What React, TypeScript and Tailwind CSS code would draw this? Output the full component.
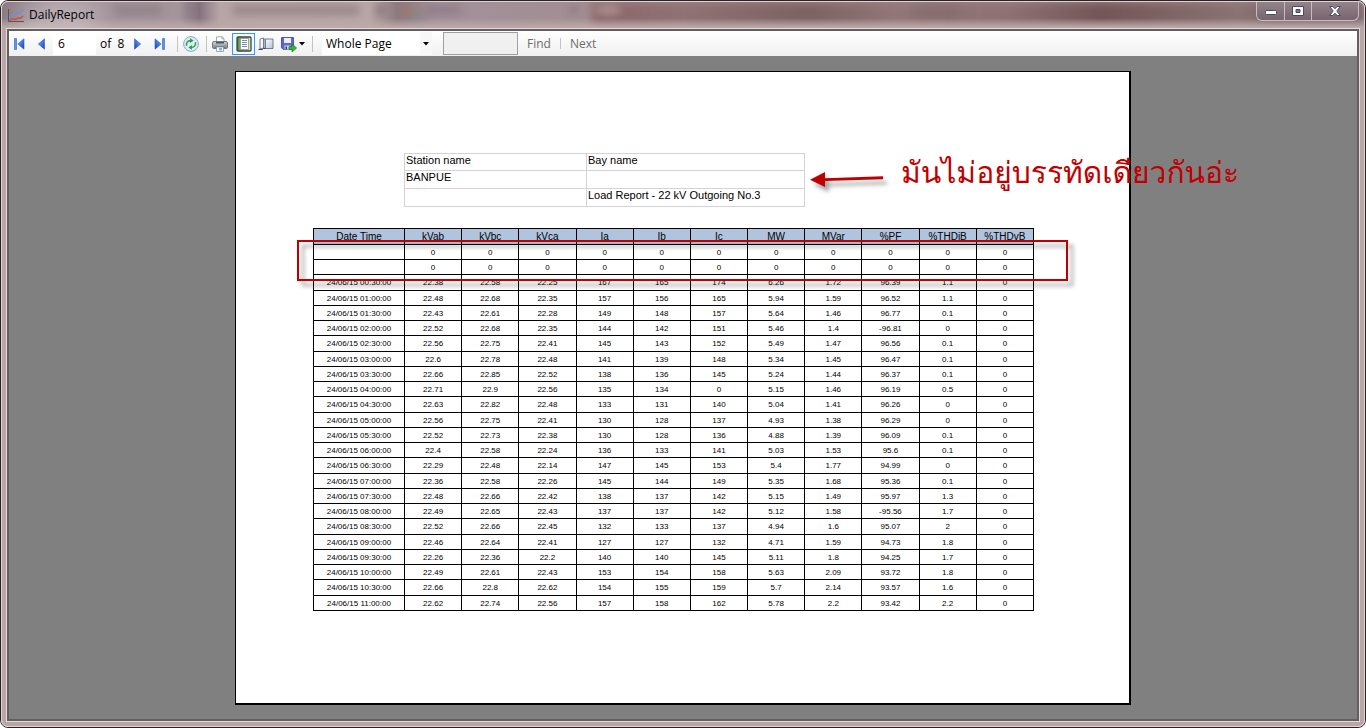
import type { ReactNode } from "react";

const columns = ["Date Time", "kVab", "kVbc", "kVca", "Ia", "Ib", "Ic", "MW", "MVar", "%PF", "%THDiB", "%THDvB"];

const rows = [
  ["", "0", "0", "0", "0", "0", "0", "0", "0", "0", "0", "0"],
  ["", "0", "0", "0", "0", "0", "0", "0", "0", "0", "0", "0"],
  ["24/06/15 00:30:00", "22.38", "22.58", "22.25", "167", "165", "174", "6.26", "1.72", "96.39", "1.1", "0"],
  ["24/06/15 01:00:00", "22.48", "22.68", "22.35", "157", "156", "165", "5.94", "1.59", "96.52", "1.1", "0"],
  ["24/06/15 01:30:00", "22.43", "22.61", "22.28", "149", "148", "157", "5.64", "1.46", "96.77", "0.1", "0"],
  ["24/06/15 02:00:00", "22.52", "22.68", "22.35", "144", "142", "151", "5.46", "1.4", "-96.81", "0", "0"],
  ["24/06/15 02:30:00", "22.56", "22.75", "22.41", "145", "143", "152", "5.49", "1.47", "96.56", "0.1", "0"],
  ["24/06/15 03:00:00", "22.6", "22.78", "22.48", "141", "139", "148", "5.34", "1.45", "96.47", "0.1", "0"],
  ["24/06/15 03:30:00", "22.66", "22.85", "22.52", "138", "136", "145", "5.24", "1.44", "96.37", "0.1", "0"],
  ["24/06/15 04:00:00", "22.71", "22.9", "22.56", "135", "134", "0", "5.15", "1.46", "96.19", "0.5", "0"],
  ["24/06/15 04:30:00", "22.63", "22.82", "22.48", "133", "131", "140", "5.04", "1.41", "96.26", "0", "0"],
  ["24/06/15 05:00:00", "22.56", "22.75", "22.41", "130", "128", "137", "4.93", "1.38", "96.29", "0", "0"],
  ["24/06/15 05:30:00", "22.52", "22.73", "22.38", "130", "128", "136", "4.88", "1.39", "96.09", "0.1", "0"],
  ["24/06/15 06:00:00", "22.4", "22.58", "22.24", "136", "133", "141", "5.03", "1.53", "95.6", "0.1", "0"],
  ["24/06/15 06:30:00", "22.29", "22.48", "22.14", "147", "145", "153", "5.4", "1.77", "94.99", "0", "0"],
  ["24/06/15 07:00:00", "22.36", "22.58", "22.26", "145", "144", "149", "5.35", "1.68", "95.36", "0.1", "0"],
  ["24/06/15 07:30:00", "22.48", "22.66", "22.42", "138", "137", "142", "5.15", "1.49", "95.97", "1.3", "0"],
  ["24/06/15 08:00:00", "22.49", "22.65", "22.43", "137", "137", "142", "5.12", "1.58", "-95.56", "1.7", "0"],
  ["24/06/15 08:30:00", "22.52", "22.66", "22.45", "132", "133", "137", "4.94", "1.6", "95.07", "2", "0"],
  ["24/06/15 09:00:00", "22.46", "22.64", "22.41", "127", "127", "132", "4.71", "1.59", "94.73", "1.8", "0"],
  ["24/06/15 09:30:00", "22.26", "22.36", "22.2", "140", "140", "145", "5.11", "1.8", "94.25", "1.7", "0"],
  ["24/06/15 10:00:00", "22.49", "22.61", "22.43", "153", "154", "158", "5.63", "2.09", "93.72", "1.8", "0"],
  ["24/06/15 10:30:00", "22.66", "22.8", "22.62", "154", "155", "159", "5.7", "2.14", "93.57", "1.6", "0"],
  ["24/06/15 11:00:00", "22.62", "22.74", "22.56", "157", "158", "162", "5.78", "2.2", "93.42", "2.2", "0"],
];

function ToolButton({ label, className, children }: { label: string; className: string; children: ReactNode }) {
  return (
    <button type="button" aria-label={label} className={`flex flex-none items-center justify-center ${className}`}>
      {children}
    </button>
  );
}

function Separator({ className }: { className: string }) {
  return <span className={`w-px flex-none bg-[#c3c3c3] ${className}`} />;
}

function Defs() {
  return (
    <svg width="0" height="0" className="absolute">
      <defs>
        <linearGradient id="blue" x1="0" y1="0" x2="1" y2="1">
          <stop offset="0" stopColor="#7db2f2" />
          <stop offset="1" stopColor="#0a3fc4" />
        </linearGradient>
        <linearGradient id="silver" x1="0" y1="0" x2="0" y2="1">
          <stop offset="0" stopColor="#d4d7da" />
          <stop offset="1" stopColor="#7d8389" />
        </linearGradient>
        <linearGradient id="green" x1="0" y1="0" x2="1" y2="0">
          <stop offset="0" stopColor="#2f7a3a" />
          <stop offset=".35" stopColor="#a9cfa6" />
          <stop offset="1" stopColor="#dbe8d6" />
        </linearGradient>
        <linearGradient id="paper" x1="0" y1="0" x2="1" y2="1">
          <stop offset="0" stopColor="#ffffff" />
          <stop offset="1" stopColor="#b3c1d6" />
        </linearGradient>
      </defs>
    </svg>
  );
}

function ChartIcon() {
  return (
    <svg width="17" height="15" viewBox="0 0 17 15" fill="none">
      <path d="M.5 1v12.500H16" stroke="#55565c" />
      <path d="M1.500 11l2.500-4 1.500-.5 1.500 2 3-4 1.500 1L15.500 1" stroke="#6d93cc" strokeWidth="1.300" />
      <path d="M1.500 12.300l3-1.500 3 .7 2.500-1.500 2 .5 3-2.500" stroke="#e0473b" strokeWidth="1.400" />
    </svg>
  );
}

function ArrowIcon({ bar, flip }: { bar?: boolean; flip?: boolean }) {
  return (
    <svg width="11" height="12" viewBox="0 0 11 12" className={flip ? "-scale-x-100" : ""}>
      {bar && <path d="M.5.500h2v11h-2z" fill="#5d92e4" stroke="#2b62c8" strokeWidth=".6" />}
      <path d={bar ? "M10 .8v10.400L3.800 6z" : "M8.500.8v10.400L2.300 6z"} fill="url(#blue)" stroke="#2660cf" strokeWidth=".6" />
    </svg>
  );
}

function RefreshIcon() {
  return (
    <svg width="16" height="16" viewBox="0 0 16 16">
      <circle cx="8" cy="8" r="7.400" fill="#dcebfa" stroke="#86a9d4" />
      <path d="M3.600 9.800C2.800 6.800 4.600 4.700 7.500 4.500" fill="none" stroke="#2f9e3c" strokeWidth="1.500" />
      <path d="M7 2.200l3.600 2.300L7 6.900z" fill="#2f9e3c" />
      <path d="M12.400 6.200c.8 3-1 5.100-3.900 5.300" fill="none" stroke="#2f9e3c" strokeWidth="1.500" />
      <path d="M9 13.800l-3.600-2.300L9 9.100z" fill="#2f9e3c" />
    </svg>
  );
}

function PrinterIcon() {
  return (
    <svg width="16" height="16" viewBox="0 0 16 16">
      <path d="M4.500 6V.8h5.700l1.800 1.700V6z" fill="#fff" stroke="#8b97a4" strokeWidth=".8" />
      <path d="M10 .8v2h2" fill="#dce4ec" stroke="#7b8794" strokeWidth=".6" />
      <rect x=".5" y="5.500" width="15" height="7" rx="1.500" fill="url(#silver)" stroke="#73797f" />
      <path d="M4 6h8v1.500H4zM3.500 10.500h9V12h-9z" fill="#50565d" />
      <path d="M4.500 11h7v4.500h-7z" fill="#fff" stroke="#7f95ad" strokeWidth=".8" />
      <path d="M7 12h3v2.500H7z" fill="#78b5de" />
      <path d="M13 8.800h1.200" stroke="#42c23f" />
    </svg>
  );
}

function LayoutIcon() {
  return (
    <svg width="16" height="16" viewBox="0 0 16 16">
      <rect x="1" y="1" width="14" height="14" rx="1" fill="url(#green)" stroke="#3c463f" strokeWidth="1.300" />
      <path d="M4.500 2.500h8v11h-8z" fill="#fff" stroke="#7a8c80" strokeWidth=".7" />
      <path d="M6 4.500h5M6 6.500h5M6 8.500h5M6 10.500h5" stroke="#7c8fa8" />
    </svg>
  );
}

function PageSetupIcon() {
  return (
    <svg width="16" height="14" viewBox="0 0 16 14">
      <path d="M2 2L5.500 1v10L2 12z" fill="#f4f7fb" stroke="#5b6470" strokeWidth=".8" />
      <path d="M5.500 1.500L8 2.500v9L5.500 11z" fill="#aab8ca" stroke="#5a6472" strokeWidth=".6" />
      <path d="M7.500 2h7.500v9.500H7.500z" fill="url(#paper)" stroke="#66707e" strokeWidth=".9" />
      <path d="M.5 12.500h3.500l1.500-1h2" fill="none" stroke="#3c424c" />
    </svg>
  );
}

function SaveIcon() {
  return (
    <svg width="16" height="16" viewBox="0 0 16 16">
      <path d="M.6 1.600h11.800v11.800H2.200L.6 11.800z" fill="#5f68d0" stroke="#454cb0" />
      <path d="M3 2h7v5H3z" fill="#eef1fb" />
      <path d="M3.500 9.500h6v4h-6z" fill="#d8dbe6" />
      <path d="M4.500 10.500H6v3H4.500z" fill="#2f3570" />
      <path d="M8 10.500h3V8l4.600 4-4.600 4V13.500H8z" fill="#2fb637" stroke="#127a1b" strokeWidth=".7" />
    </svg>
  );
}

function Caret() {
  return (
    <svg width="6" height="4" viewBox="0 0 6 4" className="flex-none">
      <path d="M0 0h6L3 3.500z" fill="#000" />
    </svg>
  );
}

function GlassBackdrop() {
  return (
    <div aria-hidden className="absolute inset-0 overflow-hidden rounded-t-md bg-[linear-gradient(90deg,#8a7a82_0%,#a2939a_4%,#a4959b_13%,#84737e_14.5%,#b7a6a7_16%,#b8a7a8_27%,#8c7a81_29%,#a3919a_32%,#a28e94_41%,#a08b90_62%)]">
      <span className="absolute inset-y-0 right-0 left-[590px] bg-[linear-gradient(90deg,#8b6668_0%,#8f7274_12%,#7d6262_28%,#937779_40%,#8d7173_54%,#735557_66%,#8b7472_84%,#7d6467_88%,#7b6870_100%)] blur-xs" />
      <span className="absolute top-1 left-28 h-2 w-12 rounded bg-[#6e5e66]/40 blur-xs" />
      <span className="absolute top-1 left-[183px] h-2 w-2 rounded bg-[#6e5e66]/40 blur-xs" />
      <span className="absolute top-1 left-[230px] h-2 w-32 rounded bg-[#6e5a5e]/50 blur-xs" />
      <span className="absolute top-1 left-[374px] h-2 w-2 rounded bg-[#5e4a4e]/60 blur-xs" />
      <span className="absolute top-1 left-[402px] h-2 w-2 rounded bg-[#c0603f]/60 blur-xs" />
      <span className="absolute top-2 left-[409px] h-2 w-2 rounded bg-[#4f9a60]/40 blur-xs" />
      <span className="absolute top-1 left-[424px] h-2 w-9 rounded bg-[#6e5a66]/40 blur-xs" />
      <span className="absolute top-1 left-[568px] h-2 w-2 rounded bg-[#6e5a66]/50 blur-xs" />
      <span className="absolute top-1 left-[594px] h-2 w-6 rounded bg-[#cbb6b6]/60 blur-xs" />
      <span className="absolute top-1 left-[910px] h-3 w-12 rounded bg-[#6c5454]/40 blur-sm" />
      <span className="absolute inset-x-0 bottom-0 h-2.5 bg-linear-to-b from-transparent to-[#bcaaaa]" />
      <span className="absolute top-1 left-4 h-5 w-20 rounded-full bg-white/40 blur-md" />
    </div>
  );
}

function TitleBar() {
  return (
    <header className="relative flex h-[26px] flex-none items-start justify-between">
      <GlassBackdrop />
      <div className="relative flex items-center gap-1 pt-[3px] pl-[6px]">
        <ChartIcon />
        <h1 className="text-xs leading-5 text-black">DailyReport</h1>
      </div>
      <div className="relative mr-[5px] flex h-[19px] overflow-hidden rounded-b-md border border-t-0 border-[#c9bbc0] bg-linear-to-b from-[#93838a] to-[#77656d]">
        <button type="button" aria-label="Minimize" className="flex w-7 items-center justify-center border-r border-[#c9bbc0]">
          <svg width="12" height="6" viewBox="0 0 12 6" className="mt-1"><rect x=".5" y=".5" width="11" height="4" rx="1" fill="#fff" stroke="#4c4a63" /></svg>
        </button>
        <button type="button" aria-label="Maximize" className="flex w-[27px] items-center justify-center border-r border-[#c9bbc0]">
          <svg width="12" height="10" viewBox="0 0 12 10"><path d="M.5.500h11v9H.5zM4 3.500v3h4v-3z" fill="#fff" fillRule="evenodd" stroke="#4c4a63" /></svg>
        </button>
        <button type="button" aria-label="Close" className="flex w-[46px] items-center justify-center">
          <svg width="12" height="10" viewBox="0 0 12 10"><path d="M.8.500h3L6 2.800 8.200.5h3L7.800 5l3.400 4.500h-3L6 7.200 3.800 9.500h-3L4.200 5z" fill="#fff" stroke="#4c4a63" /></svg>
        </button>
      </div>
    </header>
  );
}

function Toolbar() {
  return (
    <div role="toolbar" className="flex h-[25px] flex-none items-center bg-linear-to-b from-white to-[#f0f0f0] text-xs text-black">
      <ToolButton label="First page" className="h-5 w-5"><ArrowIcon bar /></ToolButton>
      <ToolButton label="Previous page" className="h-5 w-6"><ArrowIcon /></ToolButton>
      <input aria-label="Current page" defaultValue="6" className="h-[23px] w-[43px] bg-white pl-[5px] outline-none" />
      <span className="w-[33px] flex-none pl-1 whitespace-pre">of  8</span>
      <ToolButton label="Next page" className="h-5 w-4"><ArrowIcon flip /></ToolButton>
      <ToolButton label="Last page" className="h-5 w-7"><ArrowIcon bar flip /></ToolButton>
      <Separator className="ml-1 h-4" />
      <ToolButton label="Refresh" className="ml-px h-5 w-6"><RefreshIcon /></ToolButton>
      <Separator className="ml-[3px] h-4" />
      <ToolButton label="Print" className="ml-px h-5 w-6"><PrinterIcon /></ToolButton>
      <ToolButton label="Print layout" className="h-[22px] w-[23px] border border-[#3399ff] bg-[#f3f8fd]"><LayoutIcon /></ToolButton>
      <ToolButton label="Page setup" className="h-5 w-[22px]"><PageSetupIcon /></ToolButton>
      <ToolButton label="Export" className="h-5 w-8 gap-0.5"><SaveIcon /><Caret /></ToolButton>
      <Separator className="ml-[3px] h-4" />
      <div className="relative ml-[9px] flex h-[23px] w-[110px] flex-none items-center bg-white">
        <select aria-label="Zoom" defaultValue="Whole Page" className="h-full w-full appearance-none pl-1 outline-none">
          <option>Page Width</option>
          <option>Whole Page</option>
          <option>100%</option>
        </select>
        <span className="pointer-events-none absolute inset-y-0 right-0 flex w-3 items-center justify-center bg-[#f7f7f7]"><Caret /></span>
      </div>
      <input aria-label="Find text" className="ml-[11px] h-[23px] w-[75px] border border-[#a0a0a0] bg-[#f0f0f0] px-1 outline-none" />
      <button type="button" className="ml-[9px] text-[#6d6d6d]">Find</button>
      <Separator className="mx-[9px] h-[11px]" />
      <button type="button" className="text-[#6d6d6d]">Next</button>
    </div>
  );
}

function Note() {
  return (
    <div className="absolute top-0 left-full flex items-start gap-2.5 text-[#c00000]">
      <svg width="82" height="44" viewBox="0 0 82 44" className="ml-1 flex-none drop-shadow-[4px_5px_2px_rgba(0,0,0,0.35)]">
        <path d="M16 25.200L74 23.200v3L16 28z" fill="#c00000" />
        <path d="M1 26.800L16 19v15z" fill="#c00000" />
      </svg>
      <p className="font-['Tahoma','Waree','Loma','Noto_Sans_Thai',sans-serif] text-[30px] leading-10 whitespace-nowrap">มันไม่อยู่บรรทัดเดียวกันอ่ะ</p>
    </div>
  );
}

function StationInfo() {
  return (
    <div className="relative ml-[91px] w-[401px]">
      <table className="w-full table-fixed border-collapse text-[11px] leading-3 [&_td]:border [&_td]:border-[#d3d3d3] [&_td]:px-px [&_td]:align-top">
        <colgroup>
          <col className="w-[182px]" />
          <col />
        </colgroup>
        <tbody>
          <tr className="h-[17px]"><td>Station name</td><td>Bay name</td></tr>
          <tr className="h-[18px]"><td>BANPUE</td><td /></tr>
          <tr className="h-[18px]"><td /><td>Load Report - 22 kV Outgoing No.3</td></tr>
        </tbody>
      </table>
      <Note />
    </div>
  );
}

function LoadTable() {
  return (
    <div className="relative mt-[21px] w-[721px]">
      <table className="w-full table-fixed border-collapse text-center text-[8px] leading-[9px] [&_td]:border [&_td]:border-black [&_td]:p-0 [&_th]:border [&_th]:border-black [&_th]:p-0">
        <colgroup>
          <col className="w-[91px]" />
        </colgroup>
        <thead>
          <tr className="h-4 bg-[#b0c4de] text-[10px] leading-3">
            {columns.map((c) => (
              <th key={c} scope="col" className="font-normal">{c}</th>
            ))}
          </tr>
        </thead>
        <tbody>
          {rows.map((row, i) => (
            <tr key={i} className="h-[15px] nth-[4n+3]:h-4">
              {row.map((value, j) => (
                <td key={j}>{value}</td>
              ))}
            </tr>
          ))}
        </tbody>
      </table>
      {/* highlight around the rows without a date */}
      <div className="pointer-events-none absolute top-3 -right-[34px] -left-4 h-[41px] border-2 border-[#c00000] drop-shadow-[5px_5px_2px_rgba(0,0,0,0.4)]" />
    </div>
  );
}

export default function App() {
  return (
    <div className="flex min-h-screen flex-col overflow-hidden rounded-lg border border-[#2c2226] font-['Open_Sans','Noto_Sans',sans-serif]">
      <Defs />
      <div className="flex flex-1 flex-col rounded-[7px] border border-[#ded2d2] bg-[#b9a7a7]">
        <TitleBar />
        <div className="mx-1 mb-1 flex flex-1 flex-col border border-[#e4dada]">
          <div className="flex flex-1 flex-col border-2 border-[#625f60]">
            <Toolbar />
            <main className="flex flex-1 flex-col items-center bg-[#808080] pt-[15px] pb-3.5">
              <section className="w-full max-w-[896px] flex-1 border border-r-2 border-b-2 border-black bg-white pt-[81px] pl-[77px] font-['Liberation_Sans',sans-serif] text-black">
                <StationInfo />
                <LoadTable />
              </section>
            </main>
          </div>
        </div>
      </div>
    </div>
  );
}
